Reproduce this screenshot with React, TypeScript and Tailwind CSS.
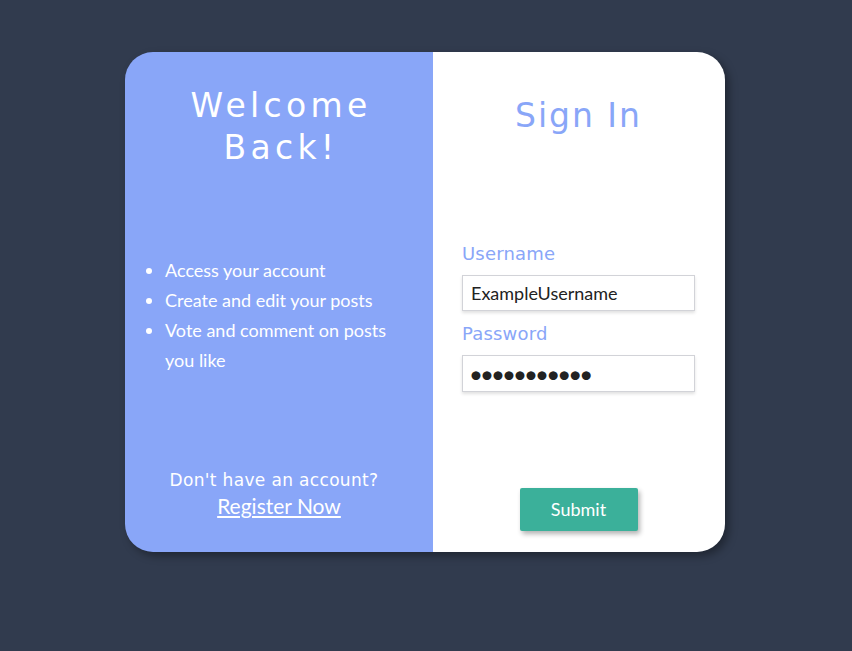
import React from "react";

export default function App() {
  return (
    <div className="min-h-[651px] w-full bg-[#313b4e] pt-[52px]">
      <div className="ml-[125px] flex h-[500px] w-[600px] overflow-hidden rounded-[28px] shadow-[4px_4px_8px_rgba(0,0,0,0.35)]">
        <div className="flex w-[308px] flex-col bg-[#89a6f8] text-white">
          <h1 className="mx-auto mt-[33px] w-[270px] pl-[4px] text-center font-['DejaVu_Sans',sans-serif] text-[33px] leading-[42px] font-normal tracking-[0.13em]">
            Welcome Back!
          </h1>
          <ul className="mt-[86px] list-disc pl-[40px] pr-[20px] font-['Lato',sans-serif] text-[18px] leading-[30px]">
            <li>Access your account</li>
            <li>Create and edit your posts</li>
            <li>Vote and comment on posts you like</li>
          </ul>
          <div className="mt-auto mb-[32px] flex flex-col items-center">
            <p className="mr-[10px] font-['DejaVu_Sans',sans-serif] text-[17px] leading-[24px] tracking-[0.02em]">
              Don't have an account?
            </p>
            <a href="#" className="font-['Lato',sans-serif] text-[21px] leading-[28px] underline">
              Register Now
            </a>
          </div>
        </div>
        <div className="flex flex-1 flex-col bg-white pl-[29px] pr-[30px]">
          <h2 className="mt-[43px] text-center font-['DejaVu_Sans',sans-serif] text-[33px] leading-[42px] tracking-[0.06em] text-[#89a6f8]">
            Sign In
          </h2>
          <label className="mt-[105px] font-['DejaVu_Sans',sans-serif] text-[18px] leading-[24px] tracking-[0.01em] text-[#89a6f8]">
            Username
          </label>
          <input
            readOnly
            value="ExampleUsername"
            className="mt-[9px] h-[36px] w-[233px] border border-[#d2d3d8] px-[8px] font-['Lato',sans-serif] text-[18px] text-[#222] shadow-[0_2px_3px_rgba(0,0,0,0.12)] outline-none"
          />
          <label className="mt-[11px] font-['DejaVu_Sans',sans-serif] text-[18px] leading-[24px] tracking-[0.01em] text-[#89a6f8]">
            Password
          </label>
          <input
            readOnly
            type="password"
            value="Password123"
            className="mt-[9px] h-[37px] w-[233px] border border-[#d2d3d8] px-[6px] font-['Lato',sans-serif] text-[24px] tracking-[-2.9px] text-[#222] shadow-[0_2px_3px_rgba(0,0,0,0.12)] outline-none"
          />
          <button className="mx-auto mt-[96px] h-[43px] w-[118px] rounded-[2px] bg-[#3bb09a] font-['Lato',sans-serif] text-[18px] text-white shadow-[2px_3px_5px_rgba(0,0,0,0.3)]">
            Submit
          </button>
        </div>
      </div>
    </div>
  );
}
